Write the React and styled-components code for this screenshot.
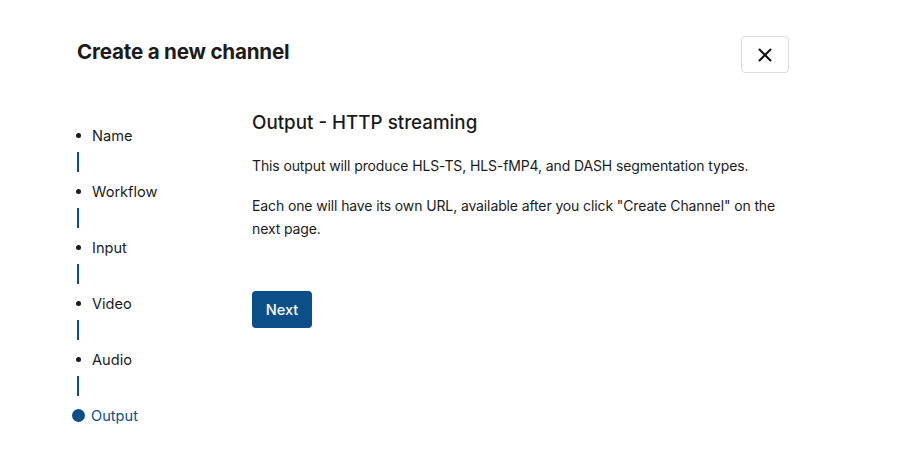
import React from "react";
import styled, { createGlobalStyle } from "styled-components";

const blue = "#0b4f88";

const GlobalStyle = createGlobalStyle`
  html, body {
    margin: 0;
    padding: 0;
    background: #fff;
    font-family: Inter, "Noto Sans", "Liberation Sans", sans-serif;
    color: #1b1b1b;
  }
`;

const Page = styled.div`
  width: 900px;
  height: 470px;
  box-sizing: border-box;
  padding: 36px 111px 0 77px;
`;

const Header = styled.div`
  display: flex;
  justify-content: space-between;
  align-items: flex-start;
`;

const Title = styled.h1`
  margin: 3px 0 0;
  font-size: 20.6px;
  font-weight: 700;
  letter-spacing: -0.2px;
`;

const CloseButton = styled.button`
  width: 48px;
  height: 37px;
  border: 1px solid #dcdcdc;
  border-radius: 4px;
  background: #fff;
  display: flex;
  align-items: center;
  justify-content: center;
  padding: 0;
`;

const Body = styled.div`
  display: grid;
  grid-template-columns: 175px 1fr;
  margin-top: 38px;
`;

const Steps = styled.ol`
  list-style: none;
  margin: 0;
  padding: 13px 0 0;
  display: flex;
  flex-direction: column;
`;

const Step = styled.li`
  display: flex;
  align-items: center;
  height: 23px;
  font-size: 14.6px;
  color: ${(p) => (p.$active ? blue : "#1b1b1b")};
`;

const Marker = styled.span`
  width: 15px;
  display: flex;
  justify-content: center;
  margin-left: -6px;
  margin-right: ${(p) => (p.$active ? "5px" : "6px")};
  &::before {
    content: "";
    display: block;
    width: ${(p) => (p.$active ? "13px" : "5px")};
    height: ${(p) => (p.$active ? "13px" : "5px")};
    border-radius: 50%;
    background: ${(p) => (p.$active ? blue : "#1b1b1b")};
  }
`;

const Connector = styled.div`
  width: 2px;
  height: 20px;
  margin: 5px 0 8px 0;
  background: ${blue};
`;

const Content = styled.div``;

const Heading = styled.h2`
  margin: 0 0 19px;
  font-size: 18.8px;
  font-weight: 500;
  line-height: 24px;
`;

const Para = styled.p`
  margin: 0 0 17px;
  font-size: 14px;
  letter-spacing: -0.12px;
  line-height: 23px;
  max-width: 560px;
`;

const NextButton = styled.button`
  margin-top: 34px;
  width: 60px;
  height: 37px;
  border: none;
  border-radius: 4px;
  background: ${blue};
  color: #fff;
  font-family: inherit;
  font-size: 14.6px;
  font-weight: 500;
`;

const steps = ["Name", "Workflow", "Input", "Video", "Audio", "Output"];

export default function App() {
  return (
    <>
      <GlobalStyle />
      <Page>
        <Header>
          <Title>Create a new channel</Title>
          <CloseButton aria-label="Close">
            <svg width="14" height="14" viewBox="0 0 14 14">
              <path d="M1.5 1.5 L12.5 12.5 M12.5 1.5 L1.5 12.5" stroke="#111" strokeWidth="2" strokeLinecap="round" />
            </svg>
          </CloseButton>
        </Header>
        <Body>
          <Steps>
            {steps.map((s, i) => {
              const active = i === steps.length - 1;
              return (
                <React.Fragment key={s}>
                  <Step $active={active}>
                    <Marker $active={active} />
                    {s}
                  </Step>
                  {!active && <Connector />}
                </React.Fragment>
              );
            })}
          </Steps>
          <Content>
            <Heading>Output - HTTP streaming</Heading>
            <Para>This output will produce HLS-TS, HLS-fMP4, and DASH segmentation types.</Para>
            <Para>
              Each one will have its own URL, available after you click "Create Channel" on the next page.
            </Para>
            <NextButton>Next</NextButton>
          </Content>
        </Body>
      </Page>
    </>
  );
}
